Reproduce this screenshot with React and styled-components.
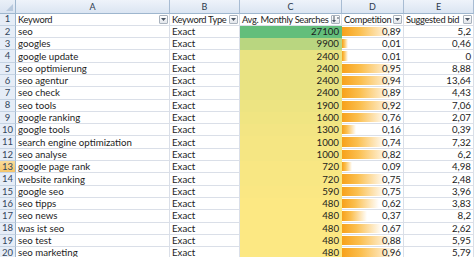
import React from "react";
import styled, { createGlobalStyle } from "styled-components";

const GlobalStyle = createGlobalStyle`
  html, body {
    margin: 0;
    padding: 0;
    background: #ffffff;
    overflow: hidden;
  }
`;

const ROWS = [
  ["seo", 27100, "0,89", "5,2"],
  ["googles", 9900, "0,01", "0,46"],
  ["google update", 2400, "0,01", "0"],
  ["seo optimierung", 2400, "0,95", "8,88"],
  ["seo agentur", 2400, "0,94", "13,64"],
  ["seo check", 2400, "0,89", "4,43"],
  ["seo tools", 1900, "0,92", "7,06"],
  ["google ranking", 1600, "0,76", "2,07"],
  ["google tools", 1300, "0,16", "0,39"],
  ["search engine optimization", 1000, "0,74", "7,32"],
  ["seo analyse", 1000, "0,82", "6,2"],
  ["google page rank", 720, "0,09", "4,98"],
  ["website ranking", 720, "0,75", "2,48"],
  ["google seo", 590, "0,75", "3,96"],
  ["seo tipps", 480, "0,62", "3,83"],
  ["seo news", 480, "0,37", "8,2"],
  ["was ist seo", 480, "0,67", "2,62"],
  ["seo test", 480, "0,88", "5,95"],
  ["seo marketing", 480, "0,96", "5,79"],
];

const MIN = 480;
const MAX = 27100;

// yellow -> green colour scale, like Excel's
const scaleColor = (v) => {
  const t = (v - MIN) / (MAX - MIN);
  const lo = [252, 232, 131];
  const hi = [99, 190, 123];
  const c = lo.map((x, i) => Math.round(x + (hi[i] - x) * Math.pow(t, 0.8)));
  return `rgb(${c.join(",")})`;
};

const barWidth = (s) => {
  const v = parseFloat(s.replace(",", "."));
  return 10 + ((v - 0.01) / 0.95) * 80;
};

const Sheet = styled.div`
  display: grid;
  grid-template-columns: 16px 154px 70px 102px 62px 70px;
  grid-auto-rows: 12.3px;
  grid-template-rows: 13.5px;
  font-family: Lato, "Liberation Sans", sans-serif;
  font-size: 9.7px;
  color: #1c1c1c;
  width: 474px;
  height: 257px;
  overflow: hidden;
`;

const Corner = styled.div`
  position: relative;
  background: linear-gradient(#eaf0f8, #d9e3f1);
  border-right: 1px solid #9eb6ce;
  border-bottom: 1px solid #9eb6ce;
  &::after {
    content: "";
    position: absolute;
    right: 2px;
    bottom: 2px;
    border-left: 7px solid transparent;
    border-bottom: 7px solid #b8c9dd;
  }
`;

const ColHead = styled.div`
  display: flex;
  align-items: center;
  justify-content: center;
  background: linear-gradient(#eef3fa, #dbe5f2);
  border-right: 1px solid #a8bcd3;
  border-bottom: 1px solid #9eb6ce;
  color: #2b3a4d;
  font-size: 9px;
  line-height: 1;
`;

const RowHead = styled.div`
  display: flex;
  align-items: center;
  justify-content: center;
  background: ${({ $active }) =>
    $active ? "linear-gradient(#f9dc9b, #f5c56a)" : "#e6edf7"};
  border-right: 1px solid #9eb6ce;
  border-bottom: 1px solid #c5d3e3;
  color: #33465c;
  font-size: 9.5px;
  line-height: 1;
`;

const Cell = styled.div`
  position: relative;
  display: flex;
  align-items: center;
  justify-content: ${({ $right }) => ($right ? "flex-end" : "flex-start")};
  padding: 0 2px;
  border-right: 1px solid ${({ $fill }) => ($fill ? "transparent" : "#dadfe8")};
  border-bottom: 1px solid ${({ $fill }) => ($fill ? "transparent" : "#dadfe8")};
  background: ${({ $fill }) => $fill || "#ffffff"};
  white-space: nowrap;
  line-height: 11px;
`;

const HeadCell = styled(Cell)`
  justify-content: space-between;
  gap: 1px;
  padding-right: 1px;
`;

const HeadText = styled.span`
  font-size: 9.3px;
  letter-spacing: -0.3px;
`;

const Bar = styled.div`
  position: absolute;
  left: 0;
  top: 1px;
  bottom: 1px;
  background: linear-gradient(90deg, #f7a11a 0%, #fbbf4f 35%, #ffffff 100%);
`;

const Value = styled.span`
  position: relative;
`;

const FilterBtn = styled.span`
  flex: none;
  display: flex;
  align-items: center;
  justify-content: center;
  width: 9px;
  height: 9px;
  box-sizing: border-box;
  border: 1px solid #a9b2bd;
  background: linear-gradient(#ffffff, #e2e6eb);
  border-radius: 1px;
`;

const Arrow = () => (
  <svg width="5" height="3" viewBox="0 0 5 3">
    <path d="M0 0H5L2.5 3Z" fill="#4a5563" />
  </svg>
);

const SortArrow = () => (
  <svg width="7" height="7" viewBox="0 0 7 7">
    <path d="M2 0V5" stroke="#4a5563" strokeWidth="1" />
    <path d="M0 4H4L2 6.5Z" fill="#4a5563" />
    <path d="M5 2H7" stroke="#4a5563" strokeWidth="1" />
  </svg>
);

const HEADERS = ["Keyword", "Keyword Type", "Avg. Monthly Searches", "Competition", "Suggested bid"];

export default function App() {
  return (
    <>
      <GlobalStyle />
      <Sheet>
        <Corner />
        {["A", "B", "C", "D", "E"].map((l) => (
          <ColHead key={l}>{l}</ColHead>
        ))}

        <RowHead>1</RowHead>
        {HEADERS.map((h, i) => (
          <HeadCell key={h}>
            <HeadText>{h}</HeadText>
            <FilterBtn>{i === 2 ? <SortArrow /> : <Arrow />}</FilterBtn>
          </HeadCell>
        ))}

        {ROWS.map(([kw, searches, comp, bid], i) => (
          <React.Fragment key={kw}>
            <RowHead $active={i + 2 === 13}>{i + 2}</RowHead>
            <Cell>{kw}</Cell>
            <Cell>Exact</Cell>
            <Cell $right $fill={scaleColor(searches)}>
              {searches}
            </Cell>
            <Cell $right>
              <Bar style={{ width: `${barWidth(comp)}%` }} />
              <Value>{comp}</Value>
            </Cell>
            <Cell $right>{bid}</Cell>
          </React.Fragment>
        ))}
      </Sheet>
    </>
  );
}
